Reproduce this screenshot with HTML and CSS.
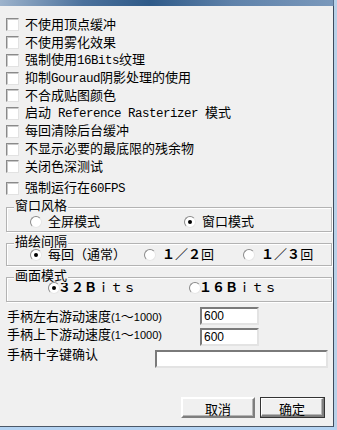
FILE: index.html
```html
<!DOCTYPE html>
<html lang="zh-CN">
<head>
    <meta charset="UTF-8">
    <meta name="viewport" content="width=device-width, initial-scale=1.0">
    <title>设置</title>
    <link rel="stylesheet" href="styles.css">
</head>
<body>
    <div class="window">
        <div class="titlebar"></div>
        <div class="client">
            <div class="checks">
                <label class="check"><input type="checkbox"><span>不使用顶点缓冲</span></label>
                <label class="check"><input type="checkbox"><span>不使用雾化效果</span></label>
                <label class="check"><input type="checkbox"><span>强制使用<span class="mono">16Bits</span>纹理</span></label>
                <label class="check"><input type="checkbox"><span>抑制<span class="mono">Gouraud</span>阴影处理的使用</span></label>
                <label class="check"><input type="checkbox"><span>不合成贴图颜色</span></label>
                <label class="check"><input type="checkbox"><span>启动<span class="mono"> Reference Rasterizer </span>模式</span></label>
                <label class="check"><input type="checkbox"><span>每回清除后台缓冲</span></label>
                <label class="check"><input type="checkbox"><span>不显示必要的最底限的残余物</span></label>
                <label class="check"><input type="checkbox"><span>关闭色深测试</span></label>
                <label class="check last"><input type="checkbox"><span>强制运行在<span class="mono">60FPS</span></span></label>
            </div>

            <div class="group g-window">
                <span class="group-title">窗口风格</span>
                <label class="radio r-full"><input type="radio" name="win"><span>全屏模式</span></label>
                <label class="radio r-win"><input type="radio" name="win" checked><span>窗口模式</span></label>
            </div>

            <div class="group g-draw">
                <span class="group-title">描绘间隔</span>
                <label class="radio r-every"><input type="radio" name="draw" checked><span>每回（通常）</span></label>
                <label class="radio r-half"><input type="radio" name="draw"><span><b>１</b>／<b>２</b>回</span></label>
                <label class="radio r-third"><input type="radio" name="draw"><span><b>１</b>／<b>３</b>回</span></label>
            </div>

            <div class="group g-mode">
                <span class="group-title">画面模式</span>
                <label class="radio r-32"><input type="radio" name="mode" checked><span><b>３２Ｂ</b>ｉｔｓ</span></label>
                <label class="radio r-16"><input type="radio" name="mode"><span><b>１６Ｂ</b>ｉｔｓ</span></label>
            </div>

            <div class="field f-x">
                <span class="field-label">手柄左右游动速度<span class="num">(1</span>～<span class="num">1000)</span></span>
                <input class="speed" type="text" value="600">
            </div>
            <div class="field f-y">
                <span class="field-label">手柄上下游动速度<span class="num">(1</span>～<span class="num">1000)</span></span>
                <input class="speed" type="text" value="600">
            </div>
            <div class="field f-cross">
                <span class="field-label">手柄十字键确认</span>
                <input class="cross" type="text" value="">
            </div>

            <div class="buttons">
                <button class="btn cancel">取消</button>
                <button class="btn ok">确定</button>
            </div>
        </div>
    </div>
</body>
</html>
```

FILE: styles.css
```css
html, body {
    margin: 0;
    padding: 0;
    background: #b9d1e8;
}
body {
    font-family: "Liberation Sans", "Noto Sans CJK SC", sans-serif;
    font-size: 13px;
    line-height: 14px;
    color: #000;
}
.window {
    box-sizing: border-box;
    width: 337px;
    height: 430px;
    display: flex;
    flex-direction: column;
    border-right: 3px solid #b9d1e8;
    border-bottom: 3px solid #b4d3f2;
}
.titlebar {
    height: 6px;
    background: linear-gradient(to right, #9db3cc 0%, #4b719c 25%, #2f5a88 45%, #5f82aa 70%, #7a98bb 100%);
    border-right: 1px solid #5a7190;
}
.client {
    flex: 1;
    background: #f0f0f0;
    border-right: 1px solid #3d4a5c;
    border-bottom: 1px solid #4c5868;
}

/* checkbox list */
.checks {
    padding: 10px 0 0 6px;
}
.check {
    display: flex;
    align-items: center;
    height: 17.75px;
    white-space: nowrap;
}
.check.last {
    margin-top: 4px;
}
.check input {
    appearance: none;
    box-sizing: border-box;
    width: 13px;
    height: 13px;
    margin: 0 6px 0 0;
    background: #fff;
    border: 1px solid;
    border-color: #8a8a8a #e2e2e2 #e2e2e2 #8a8a8a;
    box-shadow: inset 1px 1px 0 #c8c8c8;
}
.mono {
    font-family: "Liberation Mono", monospace;
    font-size: 12.5px;
    letter-spacing: -0.5px;
}

/* group boxes */
.group {
    position: relative;
    display: flex;
    align-items: center;
    margin: 0 1px 0 6px;
    border: 1px solid #b3b3b3;
    box-shadow: inset 1px 1px 0 #fff, 1px 1px 0 #fff;
}
.group-title {
    position: absolute;
    top: -9px;
    left: 7px;
    padding: 0 1px;
    background: #f0f0f0;
}
.g-window {
    margin-top: 9px;
    padding: 8px 0 3px;
}
.g-draw {
    margin-top: 11px;
    padding: 5px 0 4px;
}
.g-mode {
    margin-top: 11px;
    padding: 4px 0 7px;
}
.radio {
    display: flex;
    align-items: center;
    height: 12px;
    white-space: nowrap;
}
.radio input {
    appearance: none;
    box-sizing: border-box;
    width: 12px;
    height: 12px;
    margin: 0 6px 0 0;
    border-radius: 50%;
    background: #fff;
    border: 1px solid;
    border-color: #8a8a8a #e6e6e6 #e6e6e6 #8a8a8a;
    position: relative;
}
.radio input:checked::after {
    content: "";
    position: absolute;
    left: 3px;
    top: 3px;
    width: 4px;
    height: 4px;
    border-radius: 50%;
    background: #000;
}
.radio b {
    font-weight: bold;
}
.r-full { margin-left: 23px; }
.r-win { margin-left: 84px; }
.r-every { margin-left: 23px; }
.r-half { margin-left: 18px; }
.r-third { margin-left: 29px; }
.r-32 { margin-left: 41px; }
.r-32 input { margin-right: -2px; }
.r-16 { margin-left: 53px; }
.r-16 input { margin-right: -2px; }

/* speed fields */
.field {
    display: flex;
    align-items: center;
    padding-left: 7px;
    white-space: nowrap;
}
.field-label {
    width: 193px;
}
.num {
    font-size: 11px;
}
.f-x { margin-top: 5px; }
.f-x .field-label { margin-top: 2px; }
.f-y { margin-top: 3px; }
.f-y .field-label { margin-top: -3px; }
.f-cross { margin-top: 4px; }
.f-cross .field-label {
    width: 148px;
    margin-top: -8px;
}
.field input {
    box-sizing: border-box;
    height: 18px;
    margin: 0;
    padding: 0 2px;
    border: 2px solid;
    border-color: #7a7a7a #e3e3e3 #e3e3e3 #7a7a7a;
    background: #fff;
    font-family: "Liberation Sans", sans-serif;
    font-size: 12px;
    outline: none;
}
.speed { width: 59px; }
.cross { width: 173px; }

/* dialog buttons */
.buttons {
    display: flex;
    justify-content: flex-end;
    gap: 5px;
    margin-top: 29px;
    padding-right: 8px;
}
.btn {
    box-sizing: border-box;
    height: 21px;
    padding: 0;
    background: #f0f0f0;
    font-family: "Liberation Sans", "Noto Sans CJK SC", sans-serif;
    font-size: 13px;
    color: #000;
    border: 2px solid;
    border-color: #fff #7e7e7e #7e7e7e #fff;
    box-shadow: inset -1px -1px 0 #b5b5b5;
}
.cancel { width: 74px; }
.ok {
    width: 65px;
    outline: 1px solid #333;
    outline-offset: -1px;
    border-width: 2px 3px 3px 2px;
}
```
